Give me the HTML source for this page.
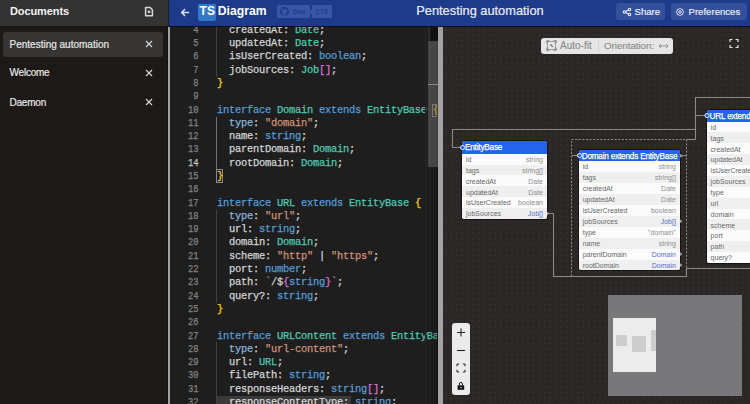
<!DOCTYPE html>
<html><head><meta charset="utf-8">
<style>
*{margin:0;padding:0;box-sizing:border-box}
html,body{width:750px;height:404px;overflow:hidden;background:#1e1e1e;font-family:"Liberation Sans",sans-serif}
.abs{position:absolute}
#side{position:absolute;left:0;top:0;width:168px;height:404px;background:#1c1917}
#sidehead{position:absolute;left:0;top:0;width:168px;height:26.6px;background:#333333;border-bottom:1px solid #161311}
#sidehead .t{position:absolute;left:10px;top:5px;font-size:11px;font-weight:bold;color:#f2f2f2;letter-spacing:-0.1px}
.item{position:absolute;left:3px;width:160px;height:25px;border-radius:3px}
.item .t{position:absolute;left:6.5px;top:6.8px;font-size:10px;color:#e6e6e6;-webkit-text-stroke:0.2px #e6e6e6}
.item .x{position:absolute;left:142px;top:8px;width:8px;height:8px}
#divl{position:absolute;left:168px;top:27px;width:2px;height:378px;background:#a0a0a0;box-shadow:-1px 0 0 #121010}
#head{position:absolute;left:169px;top:0;width:581px;height:27px;background:#1e3a8a;border-bottom:1px solid #0c1019}
#editor{position:absolute;left:170px;top:27px;width:268px;height:377px;background:#1e1e1e;overflow:hidden}
#codewrap{position:absolute;left:-170px;top:-27px;width:750px;height:430px}
.cl{position:absolute;left:217px;height:13.23px;line-height:13.23px;font-family:"Liberation Mono",monospace;font-size:10.4px;letter-spacing:-0.24px;white-space:pre;color:#d4d4d4;-webkit-text-stroke:0.25px currentColor}
.ln{position:absolute;left:160px;width:38.4px;text-align:right;transform:scaleX(0.8);transform-origin:100% 50%;height:13.23px;line-height:13.23px;font-family:"Liberation Mono",monospace;font-size:11px;letter-spacing:-0.1px;white-space:pre;-webkit-text-stroke:0.25px currentColor}
#divr{position:absolute;left:438px;top:27px;width:5px;height:377px;background:#a3a3a3}
#diag{position:absolute;left:443px;top:27px;width:307px;height:377px;background-color:#2a2726;
 background-image:radial-gradient(circle, #36322f 0.6px, transparent 0.9px);background-size:5.5px 5.5px;overflow:hidden}
#dwrap{position:absolute;left:-443px;top:-27px;width:750px;height:404px}
.tb{position:absolute;background:#f5f5f5;border-radius:2.5px;overflow:hidden;box-shadow:0 0 0 1px rgba(0,0,0,0.5)}
.th{position:absolute;left:0;top:0;width:100%;background:#2463eb;color:#fff;font-size:8.2px;letter-spacing:-0.2px;padding-left:3px;-webkit-text-stroke:0.25px #fff;white-space:nowrap;overflow:hidden}
.tr{position:absolute;left:0;width:100%;font-size:7px;white-space:nowrap;overflow:hidden}
.ta{position:absolute;left:4px;color:#686868}
.tt{position:absolute;right:4px}
.btn{position:absolute;top:3px;height:17px;border-radius:3px;background:#33509d}
</style></head><body>
<div id="side">
  <div id="sidehead"><div class="t">Documents</div>
    <svg class="abs" style="left:144px;top:6px" width="10" height="12" viewBox="0 0 10 12"><path d="M1.6 1.5h4.6l2.2 2.2v6h-6.8z" fill="none" stroke="#d8d8d8" stroke-width="1.5" stroke-linejoin="round"/><circle cx="5" cy="5.8" r="1.4" fill="#d8d8d8"/></svg>
  </div>
  <div class="item" style="top:32px;background:#373533"><div class="t" style="top:6.5px">Pentesting automation</div>
    <svg class="x" viewBox="0 0 8 8"><path d="M1 1L7 7M7 1L1 7" stroke="#d6d6d6" stroke-width="1.15"/></svg></div>
  <div class="item" style="top:60.6px"><div class="t" style="letter-spacing:-0.22px">Welcome</div>
    <svg class="x" viewBox="0 0 8 8"><path d="M1 1L7 7M7 1L1 7" stroke="#d6d6d6" stroke-width="1.15"/></svg></div>
  <div class="item" style="top:89.8px"><div class="t" style="letter-spacing:-0.22px">Daemon</div>
    <svg class="x" viewBox="0 0 8 8"><path d="M1 1L7 7M7 1L1 7" stroke="#d6d6d6" stroke-width="1.15"/></svg></div>
</div>
<div id="divl"></div>
<div id="head">
  <svg class="abs" style="left:10.5px;top:7.5px" width="10" height="9" viewBox="0 0 10 9"><path d="M8.6 4.5H1.8M4.6 1.5L1.6 4.5L4.6 7.5" fill="none" stroke="#dbe4ff" stroke-width="1.5" stroke-linecap="round" stroke-linejoin="round"/></svg>
  <div class="abs" style="left:29px;top:3.8px;width:18px;height:17px;background:#3178c6;border-radius:1px 1px 2.5px 2.5px"></div>
  <div class="abs" style="left:30.6px;top:3.3px;font-size:12px;font-weight:bold;color:#fff;line-height:17px">TS</div>
  <div class="abs" style="left:48.8px;top:3.3px;font-size:12.2px;font-weight:bold;color:#fff;line-height:17px">Diagram</div>
  <div class="abs" style="left:107.5px;top:5px;width:33px;height:13.3px;background:#3a55a5;border-radius:1.5px"></div>
  <svg class="abs" style="left:111px;top:7px" width="9" height="9" viewBox="0 0 16 16"><path fill="#1f3a86" d="M8 0C3.58 0 0 3.58 0 8c0 3.54 2.29 6.53 5.47 7.59.4.07.55-.17.55-.38v-1.34c-2.23.48-2.69-1.07-2.69-1.07-.36-.92-.89-1.17-.89-1.17-.73-.5.05-.49.05-.49.8.06 1.23.83 1.23.83.72 1.22 1.87.87 2.33.66.07-.52.28-.87.51-1.07-1.78-.2-3.65-.89-3.65-3.95 0-.87.31-1.59.82-2.15-.08-.2-.36-1.02.08-2.12 0 0 .67-.21 2.2.82.64-.18 1.32-.27 2-.27.68 0 1.36.09 2 .27 1.53-1.04 2.2-.82 2.2-.82.44 1.1.16 1.92.08 2.12.51.56.82 1.27.82 2.15 0 3.07-1.87 3.75-3.65 3.95.29.25.54.73.54 1.48v2.2c0 .21.15.46.55.38A8.01 8.01 0 0016 8c0-4.42-3.58-8-8-8z"/></svg>
  <div class="abs" style="left:123.4px;top:6px;font-size:7px;font-weight:bold;line-height:11px;color:#223e8c">Star</div>
  <div class="abs" style="left:142.5px;top:5px;width:20.6px;height:13.3px;background:#3a55a5;border-radius:1.5px"></div>
  <svg class="abs" style="left:140px;top:8.5px" width="3" height="6" viewBox="0 0 3 6"><path d="M3 0L0 3L3 6z" fill="#3a55a5"/></svg>
  <div class="abs" style="left:146.5px;top:6px;font-size:7.5px;font-weight:bold;line-height:11px;color:#223e8c">276</div>
  <div class="abs" style="left:247.3px;top:3.0px;font-size:12.8px;color:#e8ecf8;line-height:15px;-webkit-text-stroke:0.2px #e8ecf8">Pentesting automation</div>
  <div class="btn" style="left:447px;width:49px"></div>
  <svg class="abs" style="left:452.5px;top:6.5px" width="10" height="10" viewBox="0 0 24 24"><g fill="none" stroke="#e8ecf8" stroke-width="2.6" stroke-linecap="round"><circle cx="6" cy="12" r="3"/><circle cx="18" cy="6" r="3"/><circle cx="18" cy="18" r="3"/><path d="M8.7 10.7l6.6 -3.4M8.7 13.3l6.6 3.4"/></g></svg>
  <div class="abs" style="left:465.5px;top:5px;font-size:9.6px;color:#eef1fa;line-height:13px;-webkit-text-stroke:0.15px #eef1fa">Share</div>
  <div class="btn" style="left:502px;width:76px"></div>
  <svg class="abs" style="left:506px;top:7px" width="10" height="10" viewBox="0 0 24 24"><g fill="none" stroke="#e8ecf8" stroke-width="2.4"><path d="M10.325 4.317c.426 -1.756 2.924 -1.756 3.35 0a1.724 1.724 0 0 0 2.573 1.066c1.543 -.94 3.31 .826 2.37 2.37a1.724 1.724 0 0 0 1.065 2.572c1.756 .426 1.756 2.924 0 3.35a1.724 1.724 0 0 0 -1.066 2.573c.94 1.543 -.826 3.31 -2.37 2.37a1.724 1.724 0 0 0 -2.572 1.065c-.426 1.756 -2.924 1.756 -3.35 0a1.724 1.724 0 0 0 -2.573 -1.066c-1.543 .94 -3.31 -.826 -2.37 -2.37a1.724 1.724 0 0 0 -1.065 -2.572c-1.756 -.426 -1.756 -2.924 0 -3.35a1.724 1.724 0 0 0 1.066 -2.573c-.94 -1.543 .826 -3.31 2.37 -2.37c1 .608 2.296 .07 2.572 -1.065z"/><circle cx="12" cy="12" r="3"/></g></svg>
  <div class="abs" style="left:519.5px;top:5px;font-size:9.6px;color:#eef1fa;line-height:13px;-webkit-text-stroke:0.15px #eef1fa">Preferences</div>
</div>
<div id="editor"><div id="codewrap">
<div class="abs" style="left:216px;top:395.96px;width:135px;height:13.23px;background:#3a3a3a"></div>
<div class="abs" style="left:216px;top:27px;width:1px;height:50px;background:#404040"></div>
<div class="abs" style="left:216px;top:117px;width:1px;height:52px;background:#707070"></div>
<div class="abs" style="left:216px;top:210px;width:1px;height:93px;background:#404040"></div>
<div class="abs" style="left:216px;top:342px;width:1px;height:62px;background:#404040"></div>
<div class="abs" style="left:216px;top:169px;width:7px;height:14px;border:1px solid #8a8a8a"></div>
<div class="abs" style="left:432px;top:104px;width:6px;height:13px;border:1px solid #8a8a8a"></div>
<div class="ln" style="top:23.84px;color:#858585">4</div>
<div class="ln" style="top:37.13px;color:#858585">5</div>
<div class="ln" style="top:50.42px;color:#858585">6</div>
<div class="ln" style="top:63.71px;color:#858585">7</div>
<div class="ln" style="top:77.00px;color:#858585">8</div>
<div class="ln" style="top:90.29px;color:#858585">9</div>
<div class="ln" style="top:103.58px;color:#858585">10</div>
<div class="ln" style="top:116.87px;color:#858585">11</div>
<div class="ln" style="top:130.16px;color:#858585">12</div>
<div class="ln" style="top:143.45px;color:#858585">13</div>
<div class="ln" style="top:156.74px;color:#c6c6c6">14</div>
<div class="ln" style="top:170.03px;color:#858585">15</div>
<div class="ln" style="top:183.32px;color:#858585">16</div>
<div class="ln" style="top:196.61px;color:#858585">17</div>
<div class="ln" style="top:209.90px;color:#858585">18</div>
<div class="ln" style="top:223.19px;color:#858585">19</div>
<div class="ln" style="top:236.48px;color:#858585">20</div>
<div class="ln" style="top:249.77px;color:#858585">21</div>
<div class="ln" style="top:263.06px;color:#858585">22</div>
<div class="ln" style="top:276.35px;color:#858585">23</div>
<div class="ln" style="top:289.64px;color:#858585">24</div>
<div class="ln" style="top:302.93px;color:#858585">25</div>
<div class="ln" style="top:316.22px;color:#858585">26</div>
<div class="ln" style="top:329.51px;color:#858585">27</div>
<div class="ln" style="top:342.80px;color:#858585">28</div>
<div class="ln" style="top:356.09px;color:#858585">29</div>
<div class="ln" style="top:369.38px;color:#858585">30</div>
<div class="ln" style="top:382.67px;color:#858585">31</div>
<div class="ln" style="top:395.96px;color:#858585">32</div>
<div class="ln" style="top:409.25px;color:#858585">33</div>
<div class="cl" style="top:23.84px"><span style="color:#d4d4d4">  createdAt: </span><span style="color:#4ec9b0">Date</span><span style="color:#d4d4d4">;</span></div>
<div class="cl" style="top:37.13px"><span style="color:#d4d4d4">  updatedAt: </span><span style="color:#4ec9b0">Date</span><span style="color:#d4d4d4">;</span></div>
<div class="cl" style="top:50.42px"><span style="color:#d4d4d4">  isUserCreated: </span><span style="color:#569cd6">boolean</span><span style="color:#d4d4d4">;</span></div>
<div class="cl" style="top:63.71px"><span style="color:#d4d4d4">  jobSources: </span><span style="color:#4ec9b0">Job</span><span style="color:#da70d6">[]</span><span style="color:#d4d4d4">;</span></div>
<div class="cl" style="top:77.00px"><span style="color:#ffd700">}</span></div>
<div class="cl" style="top:90.29px"></div>
<div class="cl" style="top:103.58px"><span style="color:#569cd6">interface </span><span style="color:#4ec9b0">Domain </span><span style="color:#569cd6">extends </span><span style="color:#4ec9b0">EntityBase </span><span style="color:#ffd700">{</span></div>
<div class="cl" style="top:116.87px"><span style="color:#d4d4d4">  </span><span style="color:#8ab4dc">type</span><span style="color:#d4d4d4">: </span><span style="color:#ce9178">"domain"</span><span style="color:#d4d4d4">;</span></div>
<div class="cl" style="top:130.16px"><span style="color:#d4d4d4">  name: </span><span style="color:#569cd6">string</span><span style="color:#d4d4d4">;</span></div>
<div class="cl" style="top:143.45px"><span style="color:#d4d4d4">  parentDomain: </span><span style="color:#4ec9b0">Domain</span><span style="color:#d4d4d4">;</span></div>
<div class="cl" style="top:156.74px"><span style="color:#d4d4d4">  rootDomain: </span><span style="color:#4ec9b0">Domain</span><span style="color:#d4d4d4">;</span></div>
<div class="cl" style="top:170.03px"><span style="color:#ffd700">}</span></div>
<div class="cl" style="top:183.32px"></div>
<div class="cl" style="top:196.61px"><span style="color:#569cd6">interface </span><span style="color:#4ec9b0">URL </span><span style="color:#569cd6">extends </span><span style="color:#4ec9b0">EntityBase </span><span style="color:#ffd700">{</span></div>
<div class="cl" style="top:209.90px"><span style="color:#d4d4d4">  </span><span style="color:#8ab4dc">type</span><span style="color:#d4d4d4">: </span><span style="color:#ce9178">"url"</span><span style="color:#d4d4d4">;</span></div>
<div class="cl" style="top:223.19px"><span style="color:#d4d4d4">  url: </span><span style="color:#569cd6">string</span><span style="color:#d4d4d4">;</span></div>
<div class="cl" style="top:236.48px"><span style="color:#d4d4d4">  domain: </span><span style="color:#4ec9b0">Domain</span><span style="color:#d4d4d4">;</span></div>
<div class="cl" style="top:249.77px"><span style="color:#d4d4d4">  scheme: </span><span style="color:#ce9178">"http"</span><span style="color:#d4d4d4"> | </span><span style="color:#ce9178">"https"</span><span style="color:#d4d4d4">;</span></div>
<div class="cl" style="top:263.06px"><span style="color:#d4d4d4">  port: </span><span style="color:#569cd6">number</span><span style="color:#d4d4d4">;</span></div>
<div class="cl" style="top:276.35px"><span style="color:#d4d4d4">  path: </span><span style="color:#9a9a9a">`</span><span style="color:#d4d4d4">/$</span><span style="color:#da70d6">{</span><span style="color:#569cd6">string</span><span style="color:#da70d6">}</span><span style="color:#9a9a9a">`</span><span style="color:#d4d4d4">;</span></div>
<div class="cl" style="top:289.64px"><span style="color:#d4d4d4">  query?: </span><span style="color:#569cd6">string</span><span style="color:#d4d4d4">;</span></div>
<div class="cl" style="top:302.93px"><span style="color:#ffd700">}</span></div>
<div class="cl" style="top:316.22px"></div>
<div class="cl" style="top:329.51px"><span style="color:#569cd6">interface </span><span style="color:#4ec9b0">URLContent </span><span style="color:#569cd6">extends </span><span style="color:#4ec9b0">EntityBase {</span></div>
<div class="cl" style="top:342.80px"><span style="color:#d4d4d4">  </span><span style="color:#8ab4dc">type</span><span style="color:#d4d4d4">: </span><span style="color:#ce9178">"url-content"</span><span style="color:#d4d4d4">;</span></div>
<div class="cl" style="top:356.09px"><span style="color:#d4d4d4">  url: </span><span style="color:#4ec9b0">URL</span><span style="color:#d4d4d4">;</span></div>
<div class="cl" style="top:369.38px"><span style="color:#d4d4d4">  filePath: </span><span style="color:#569cd6">string</span><span style="color:#d4d4d4">;</span></div>
<div class="cl" style="top:382.67px"><span style="color:#d4d4d4">  responseHeaders: </span><span style="color:#569cd6">string</span><span style="color:#da70d6">[]</span><span style="color:#d4d4d4">;</span></div>
<div class="cl" style="top:395.96px"><span style="color:#d4d4d4">  responseContentType: </span><span style="color:#569cd6">string</span><span style="color:#d4d4d4">;</span></div>
<div class="cl" style="top:409.25px"></div>
<div class="abs" style="left:425px;top:27px;width:1px;height:377px;background:#252525"></div>
<div class="abs" style="left:430px;top:27px;width:7px;height:377px;background:rgba(0,0,0,0.12);border-left:1px solid rgba(255,255,255,0.03)"></div>
<div class="abs" style="left:437px;top:27px;width:1px;height:377px;background:#101010"></div>
<div class="abs" style="left:428px;top:27px;width:10px;height:14px;background:rgba(0,0,0,0.3)"></div>
<div class="abs" style="left:428px;top:27px;width:2px;height:14px;background:#2a2a2a"></div>
<div class="abs" style="left:428px;top:41px;width:10px;height:126px;background:rgba(121,121,121,0.45)"></div>
<div class="abs" style="left:428px;top:84px;width:10px;height:1px;background:#8a8a8a"></div>
</div></div>
<div id="divr"></div>
<div id="diag"><div id="dwrap">
<svg class="abs" style="left:0;top:0" width="750" height="404">
 <g fill="none" stroke="#8c8986" stroke-width="1.1">
  <path d="M750 97.5H695.5V139.5M695.5 115.5H706M695.5 129.5H452.5V147.5H462"/>
  <path d="M686.5 139.5H695.5"/>
  <path d="M547 213.5H553.5V276.5H686.5V268.5H750"/>
  <path d="M572 155.5H579"/>
 </g>
 <rect x="571.5" y="139.5" width="115" height="137" fill="none" stroke="#8f8c89" stroke-width="1" stroke-dasharray="2 1.6"/>
</svg>
<div class="tb" style="left:462px;top:140.7px;width:85px;height:78.48px"><div class="th" style="height:12.9px;line-height:12.9px"><span style="position:relative;top:1.3px">EntityBase</span></div><div class="tr" style="top:12.90px;height:10.93px;line-height:10.93px;background:#fbfbfb"><span class="ta" style="top:1.2px">id</span><span class="tt" style="top:1.2px;color:#8f8f8f">string</span></div><div class="tr" style="top:23.83px;height:10.93px;line-height:10.93px;background:#efefef"><span class="ta" style="top:1.2px">tags</span><span class="tt" style="top:1.2px;color:#8f8f8f">string[]</span></div><div class="tr" style="top:34.76px;height:10.93px;line-height:10.93px;background:#fbfbfb"><span class="ta" style="top:1.2px">createdAt</span><span class="tt" style="top:1.2px;color:#8f8f8f">Date</span></div><div class="tr" style="top:45.69px;height:10.93px;line-height:10.93px;background:#efefef"><span class="ta" style="top:1.2px">updatedAt</span><span class="tt" style="top:1.2px;color:#8f8f8f">Date</span></div><div class="tr" style="top:56.62px;height:10.93px;line-height:10.93px;background:#fbfbfb"><span class="ta" style="top:1.2px">isUserCreated</span><span class="tt" style="top:1.2px;color:#8f8f8f">boolean</span></div><div class="tr" style="top:67.55px;height:10.93px;line-height:10.93px;background:#efefef"><span class="ta" style="top:1.2px">jobSources</span><span class="tt" style="top:1.2px;color:#5270cc">Job[]</span></div></div><div class="tb" style="left:578.7px;top:149.6px;width:101.2px;height:120.90px"><div class="th" style="height:11.7px;line-height:11.7px"><span style="position:relative;top:1.3px">Domain extends EntityBase</span></div><div class="tr" style="top:11.70px;height:10.92px;line-height:10.92px;background:#fbfbfb"><span class="ta" style="top:1.2px">id</span><span class="tt" style="top:1.2px;color:#8f8f8f">string</span></div><div class="tr" style="top:22.62px;height:10.92px;line-height:10.92px;background:#efefef"><span class="ta" style="top:1.2px">tags</span><span class="tt" style="top:1.2px;color:#8f8f8f">string[]</span></div><div class="tr" style="top:33.54px;height:10.92px;line-height:10.92px;background:#fbfbfb"><span class="ta" style="top:1.2px">createdAt</span><span class="tt" style="top:1.2px;color:#8f8f8f">Date</span></div><div class="tr" style="top:44.46px;height:10.92px;line-height:10.92px;background:#efefef"><span class="ta" style="top:1.2px">updatedAt</span><span class="tt" style="top:1.2px;color:#8f8f8f">Date</span></div><div class="tr" style="top:55.38px;height:10.92px;line-height:10.92px;background:#fbfbfb"><span class="ta" style="top:1.2px">isUserCreated</span><span class="tt" style="top:1.2px;color:#8f8f8f">boolean</span></div><div class="tr" style="top:66.30px;height:10.92px;line-height:10.92px;background:#efefef"><span class="ta" style="top:1.2px">jobSources</span><span class="tt" style="top:1.2px;color:#5270cc">Job[]</span></div><div class="tr" style="top:77.22px;height:10.92px;line-height:10.92px;background:#fbfbfb"><span class="ta" style="top:1.2px">type</span><span class="tt" style="top:1.2px;color:#8f8f8f">"domain"</span></div><div class="tr" style="top:88.14px;height:10.92px;line-height:10.92px;background:#efefef"><span class="ta" style="top:1.2px">name</span><span class="tt" style="top:1.2px;color:#8f8f8f">string</span></div><div class="tr" style="top:99.06px;height:10.92px;line-height:10.92px;background:#fbfbfb"><span class="ta" style="top:1.2px">parentDomain</span><span class="tt" style="top:1.2px;color:#5270cc">Domain</span></div><div class="tr" style="top:109.98px;height:10.92px;line-height:10.92px;background:#efefef"><span class="ta" style="top:1.2px">rootDomain</span><span class="tt" style="top:1.2px;color:#5270cc">Domain</span></div></div><div class="tb" style="left:706.6px;top:109.8px;width:110px;height:153.11px"><div class="th" style="height:11.8px;line-height:11.8px"><span style="position:relative;top:1.3px">URL extends EntityBase</span></div><div class="tr" style="top:11.80px;height:10.87px;line-height:10.87px;background:#fbfbfb"><span class="ta" style="top:1.2px">id</span><span class="tt" style="top:1.2px;color:#8f8f8f">string</span></div><div class="tr" style="top:22.67px;height:10.87px;line-height:10.87px;background:#efefef"><span class="ta" style="top:1.2px">tags</span><span class="tt" style="top:1.2px;color:#8f8f8f">string[]</span></div><div class="tr" style="top:33.54px;height:10.87px;line-height:10.87px;background:#fbfbfb"><span class="ta" style="top:1.2px">createdAt</span><span class="tt" style="top:1.2px;color:#8f8f8f">Date</span></div><div class="tr" style="top:44.41px;height:10.87px;line-height:10.87px;background:#efefef"><span class="ta" style="top:1.2px">updatedAt</span><span class="tt" style="top:1.2px;color:#8f8f8f">Date</span></div><div class="tr" style="top:55.28px;height:10.87px;line-height:10.87px;background:#fbfbfb"><span class="ta" style="top:1.2px">isUserCreated</span><span class="tt" style="top:1.2px;color:#8f8f8f">boolean</span></div><div class="tr" style="top:66.15px;height:10.87px;line-height:10.87px;background:#efefef"><span class="ta" style="top:1.2px">jobSources</span><span class="tt" style="top:1.2px;color:#5270cc">Job[]</span></div><div class="tr" style="top:77.02px;height:10.87px;line-height:10.87px;background:#fbfbfb"><span class="ta" style="top:1.2px">type</span><span class="tt" style="top:1.2px;color:#8f8f8f">"url"</span></div><div class="tr" style="top:87.89px;height:10.87px;line-height:10.87px;background:#efefef"><span class="ta" style="top:1.2px">url</span><span class="tt" style="top:1.2px;color:#8f8f8f">string</span></div><div class="tr" style="top:98.76px;height:10.87px;line-height:10.87px;background:#fbfbfb"><span class="ta" style="top:1.2px">domain</span><span class="tt" style="top:1.2px;color:#5270cc">Domain</span></div><div class="tr" style="top:109.63px;height:10.87px;line-height:10.87px;background:#efefef"><span class="ta" style="top:1.2px">scheme</span><span class="tt" style="top:1.2px;color:#8f8f8f">"http" | "https"</span></div><div class="tr" style="top:120.50px;height:10.87px;line-height:10.87px;background:#fbfbfb"><span class="ta" style="top:1.2px">port</span><span class="tt" style="top:1.2px;color:#8f8f8f">number</span></div><div class="tr" style="top:131.37px;height:10.87px;line-height:10.87px;background:#efefef"><span class="ta" style="top:1.2px">path</span><span class="tt" style="top:1.2px;color:#8f8f8f">`/${string}`</span></div><div class="tr" style="top:142.24px;height:10.87px;line-height:10.87px;background:#fbfbfb"><span class="ta" style="top:1.2px">query?</span><span class="tt" style="top:1.2px;color:#8f8f8f">string</span></div></div>
<svg class="abs" style="left:0;top:0" width="750" height="404">
 <g fill="#9a9794">
  <path d="M680 153.8L683 155.8L680 157.8z"/>
  <path d="M680 219.3L682.5 221.3L680 223.3z"/>
  <path d="M680 252L682.5 254L680 256z"/>
  <path d="M680 263L682.5 265L680 267z"/>
  <path d="M547 211.5L549.5 213.5L547 215.5z"/>
 </g>
 <path d="M680 155.8H686.5" stroke="#9a9794" stroke-width="1"/>
 <g fill="#2463eb" stroke="#e8e8f0" stroke-width="1">
  <circle cx="462.5" cy="147.5" r="2.1"/>
  <circle cx="579.5" cy="155.5" r="2.1"/>
  <circle cx="707" cy="115.5" r="2.1"/>
 </g>
</svg>
<div class="abs" style="left:541px;top:38px;width:131.5px;height:15.5px;background:#e5e5e5;border-radius:3px"></div>
<svg class="abs" style="left:546px;top:40px" width="11" height="11" viewBox="0 0 11 11"><rect x="1.5" y="1.5" width="8" height="8" fill="none" stroke="#a0a0a0" stroke-width="1"/><path d="M1 3.5V1H3.5M7.5 1H10V3.5M10 7.5V10H7.5M3.5 10H1V7.5" fill="none" stroke="#888" stroke-width="1.3"/><path d="M4.3 4.3L6.8 6.8" stroke="#666" stroke-width="1.2"/></svg>
<div class="abs" style="left:560px;top:39.7px;font-size:10px;line-height:12px;color:#8a8a8a;-webkit-text-stroke:0.12px #8a8a8a">Auto-fit</div>
<div class="abs" style="left:597.5px;top:40px;width:1px;height:12px;background:#d6d6d6"></div>
<div class="abs" style="left:604px;top:40px;font-size:9.7px;line-height:12px;color:#8a8a8a;-webkit-text-stroke:0.12px #8a8a8a">Orientation:</div><svg class="abs" style="left:658px;top:43px" width="11" height="6" viewBox="0 0 11 6"><path d="M1 3H10M3 1L1 3L3 5M8 1L10 3L8 5" fill="none" stroke="#8c8c8c" stroke-width="0.9"/></svg>
<svg class="abs" style="left:729px;top:38px" width="10" height="11" viewBox="0 0 10 11"><path d="M1 4V1.5H3.5M6.5 1.5H9V4M9 7V9.5H6.5M3.5 9.5H1V7" fill="none" stroke="#e0e0e0" stroke-width="1.2"/></svg>
<div class="abs" style="left:452.2px;top:323px;width:18.1px;height:71.5px;background:#ebebeb;border-radius:3px"></div>
<svg class="abs" style="left:452px;top:323px" width="19" height="73" viewBox="0 0 19 73">
 <g fill="none" stroke="#222" stroke-width="1.1">
  <path d="M9 5.5V13.5M5 9.5H13"/>
  <path d="M5 27.5H13"/>
 </g>
 <path d="M5 43.2V41.5Q5 41 5.5 41H7.2M10.8 41H12.5Q13 41 13 41.5V43.2M13 46.8V48.5Q13 49 12.5 49H10.8M7.2 49H5.5Q5 49 5 48.5V46.8" fill="none" stroke="#333" stroke-width="1.2"/>
 <path d="M5.6 62.3h6.6v4.5h-6.6z" fill="#111"/>
 <path d="M7.4 62.3V60.9a1.5 1.5 0 0 1 3 0V62.3" fill="none" stroke="#111" stroke-width="1"/>
 <rect x="8.4" y="64" width="1.2" height="1.2" fill="#ddd"/>
</svg>
<div class="abs" style="left:608px;top:295px;width:134px;height:101px;background:#78787a"></div>
<div class="abs" style="left:613px;top:318px;width:43px;height:54px;background:#ececec"></div>
<div class="abs" style="left:616px;top:334.5px;width:11px;height:11px;background:#cdcdcd"></div>
<div class="abs" style="left:632px;top:336px;width:14px;height:16px;background:#cdcdcd"></div>
<div class="abs" style="left:651px;top:330px;width:5px;height:21px;background:#cdcdcd"></div>
</div></div>
</body></html>
